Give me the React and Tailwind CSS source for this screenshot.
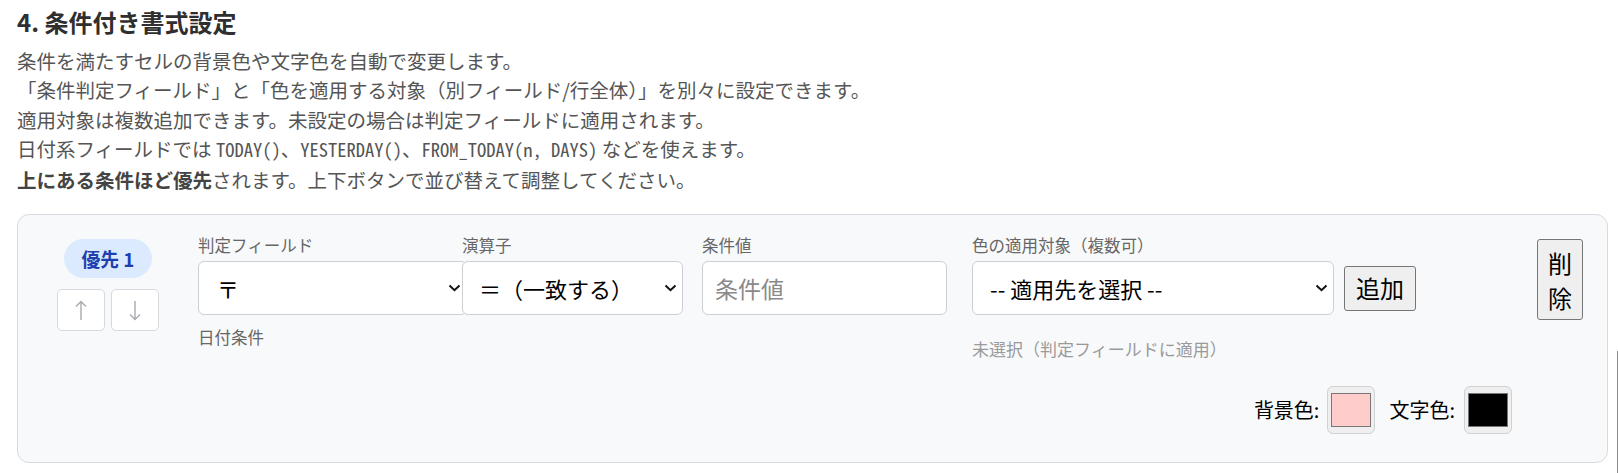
import React from 'react';

const Chevron = () => (
    <svg
        className="pointer-events-none absolute right-[6px] top-1/2 -translate-y-1/2"
        width="13"
        height="8"
        viewBox="0 0 13 8"
        fill="none"
    >
        <path d="M1.5 1.5 6.5 6.2 11.5 1.5" stroke="#111" strokeWidth="2" />
    </svg>
);

const SelectBox = ({ value, widthClass, padClass }) => (
    <div className={`relative h-[54px] ${widthClass}`}>
        <select
            defaultValue={value}
            className={`h-full w-full appearance-none rounded-[6px] border border-[#cccfd3] bg-white ${padClass} pr-8 text-[22px] text-black outline-none`}
        >
            <option value={value}>{value}</option>
        </select>
        <Chevron />
    </div>
);

const Arrow = ({ down }) => (
    <svg width="12" height="21" viewBox="0 0 12 21" fill="none" className={down ? 'rotate-180' : ''}>
        <path d="M6 20V1.5M1 6.5 6 1.5l5 5" stroke="#a9a9b0" strokeWidth="1.4" />
    </svg>
);

const Swatch = ({ color }) => (
    <button className="flex h-[48px] w-[48px] items-center justify-center rounded-[6px] border border-[#cfd1d4] bg-[#efefef]">
        <span className={`block h-[34px] w-[40px] border border-[#777] ${color}`} />
    </button>
);

const Label = ({ children }) => (
    <div className="mb-[5px] text-[16.5px] leading-[22px] text-[#666]">{children}</div>
);

const Code = ({ children }) => (
    <code className="font-['Noto_Sans_Mono_CJK_JP','Liberation_Mono',monospace] text-[18.5px]">{children}</code>
);

export default function App() {
    return (
        <div className="relative h-[473px] bg-white pl-[17px] pr-[10px] pt-[6px] font-['Noto_Sans_CJK_JP',sans-serif]">
            <h2 className="mb-[8px] text-[24px] font-bold leading-[32px] text-[#2f2f2f]">4. 条件付き書式設定</h2>

            <div className="text-[19.5px] leading-[29.4px] text-[#555]">
                <p>条件を満たすセルの背景色や文字色を自動で変更します。</p>
                <p>「条件判定フィールド」と「色を適用する対象（別フィールド/行全体）」を別々に設定できます。</p>
                <p>適用対象は複数追加できます。未設定の場合は判定フィールドに適用されます。</p>
                <p>
                    日付系フィールドでは <Code>TODAY()</Code>、<Code>YESTERDAY()</Code>、<Code>FROM_TODAY(n, DAYS)</Code> などを使えます。
                </p>
                <p>
                    <strong className="font-bold text-[#444]">上にある条件ほど優先</strong>されます。上下ボタンで並び替えて調整してください。
                </p>
            </div>

            <div className="mt-[20px] rounded-[12px] border border-[#d8dadf] bg-[#f8f9fa] pb-[28px] pl-[16px] pr-[24px] pt-[19px]">
                <div className="flex items-start">
                    <div className="flex w-[148px] flex-col items-center pt-[5px]">
                        <span className="rounded-full bg-[#dbeafe] px-[18px] text-[18.75px] font-bold leading-[39px] text-[#1e40af]">
                            優先 1
                        </span>
                        <div className="mt-[11px] flex gap-[6px]">
                            <button className="flex h-[42px] w-[48px] items-center justify-center rounded-[5px] border border-[#d6d9de] bg-white">
                                <Arrow />
                            </button>
                            <button className="flex h-[42px] w-[48px] items-center justify-center rounded-[5px] border border-[#d6d9de] bg-white">
                                <Arrow down />
                            </button>
                        </div>
                    </div>

                    <div className="ml-[16px] w-[246px]">
                        <Label>判定フィールド</Label>
                        <SelectBox value="〒" widthClass="w-[269px]" padClass="pl-[18px]" />
                        <div className="mt-[11px] text-[16.5px] leading-[22px] text-[#666]">日付条件</div>
                    </div>

                    <div className="ml-[18px] w-[221px]">
                        <Label>演算子</Label>
                        <SelectBox value="＝（一致する）" widthClass="w-[221px]" padClass="pl-[16px]" />
                    </div>

                    <div className="ml-[19px] w-[245px]">
                        <Label>条件値</Label>
                        <input
                            placeholder="条件値"
                            className="h-[54px] w-[245px] rounded-[6px] border border-[#cccfd3] bg-white px-[12px] text-[23px] text-black outline-none placeholder:text-[#8a8a8a]"
                        />
                    </div>

                    <div className="ml-[25px]">
                        <Label>色の適用対象（複数可）</Label>
                        <div className="flex items-center">
                            <SelectBox value="-- 適用先を選択 --" widthClass="w-[362px]" padClass="pl-[17px]" />
                            <button className="ml-[10px] h-[45px] w-[72px] rounded-[3px] border border-[#767676] bg-[#efefef] text-[24px] leading-[36px] text-black">
                                追加
                            </button>
                        </div>
                        <div className="mt-[23px] text-[17px] leading-[22px] text-[#9a9a9a]">未選択（判定フィールドに適用）</div>
                    </div>

                    <button className="ml-[121px] mt-[5px] h-[81px] w-[46px] rounded-[3px] border border-[#767676] bg-[#efefef] px-[10px] text-[24px] leading-[35px] text-black">
                        削除
                    </button>
                </div>

                <div className="mr-[71px] mt-[25.5px] flex items-center justify-end">
                    <span className="mr-[8px] text-[20px] text-black">背景色:</span>
                    <Swatch color="bg-[#ffcccc]" />
                    <span className="ml-[14px] mr-[9px] text-[20px] text-black">文字色:</span>
                    <Swatch color="bg-black" />
                </div>
            </div>

            <div className="absolute right-0 top-[351px] h-[122px] w-px bg-[#8a8a8a]" />
        </div>
    );
}
